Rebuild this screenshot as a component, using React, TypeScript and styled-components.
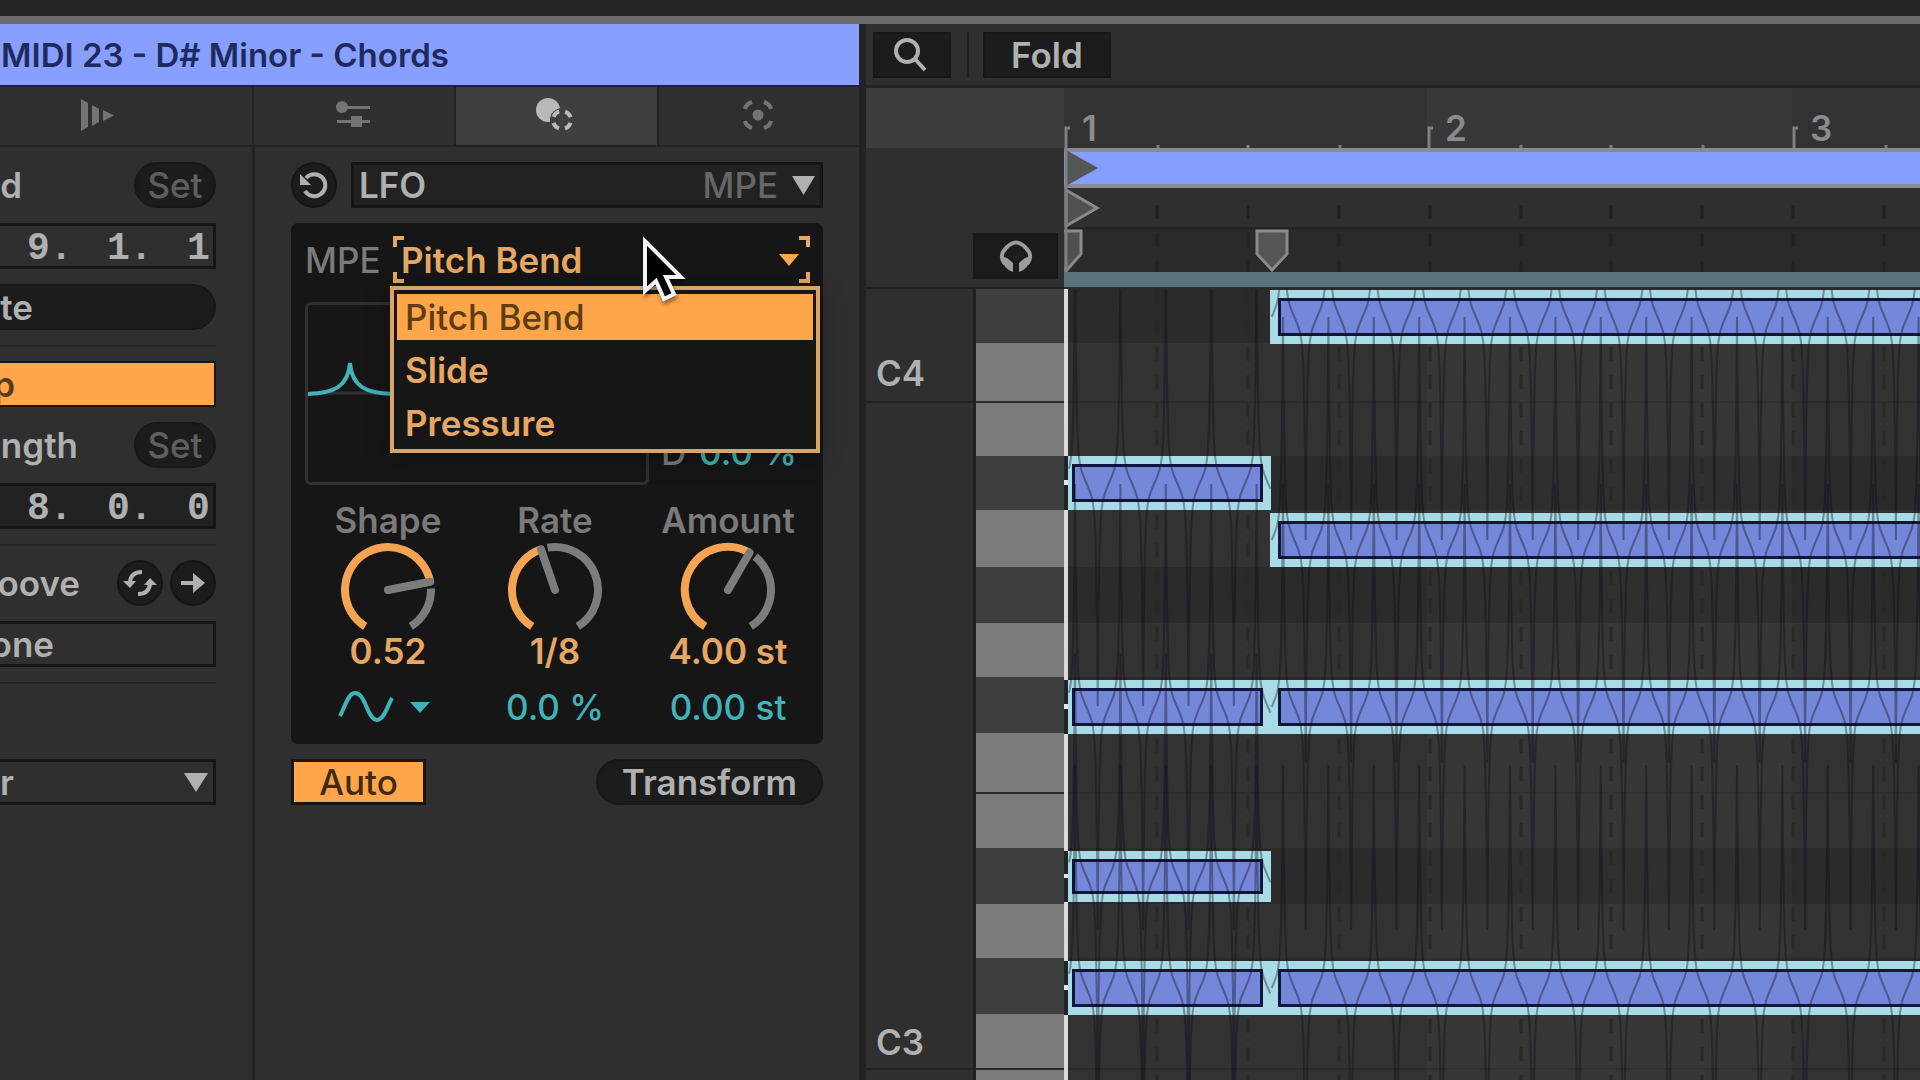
import React from "react";
import styled, { createGlobalStyle, css } from "styled-components";

const c = {
  bg: "#2f2f2f",
  edge: "#222222",
  ink: "#161616",
  well: "#1c1c1c",
  text: "#b0b0b0",
  dim: "#7a7a7a",
  faint: "#5f5f5f",
  orange: "#ffa54a",
  orangeText: "#e6a765",
  cyan: "#42b1b8",
  blue: "#879fff",
  aqua: "#a9dbe6",
  note: "#7587d8",
};

const Global = createGlobalStyle`
  *, *::before, *::after { box-sizing: border-box; }
  body {
    margin: 0;
    background: ${c.bg};
    overflow: hidden;
  }
  body, button, input, select {
    font-family: Inter, "Liberation Sans", sans-serif;
    font-size: 35px;
    font-weight: 600;
    line-height: 40px;
    color: ${c.text};
  }
  button, input, select {
    margin: 0;
    padding: 0;
    border: 0;
    background: none;
    appearance: none;
    outline: none;
  }
  svg { display: block; flex: none; }
`;

/* ---------- page frame ---------- */

const Page = styled.div`
  display: flex;
  flex-direction: column;
  height: 100vh;
  overflow: hidden;
`;
const TopStrip = styled.div`
  flex: none;
  height: 24px;
  background: #242424;
  border-bottom: 8px solid #6a6a6a;
`;
const Workspace = styled.main`
  flex: 1;
  min-height: 0;
  display: flex;
`;

/* ---------- clip panel ---------- */

const ClipPanel = styled.section`
  flex: none;
  width: 866px;
  display: flex;
  flex-direction: column;
  border-right: 7px solid ${c.edge};
`;
const ClipHeader = styled.header`
  height: 61px;
  display: flex;
  align-items: center;
  background: ${c.blue};
`;
const ClipTitle = styled.h1`
  margin: 0;
  width: 449px;
  display: flex;
  justify-content: flex-end;
  white-space: pre;
  font-size: 33px;
  font-weight: 600;
  color: #1f2b5e;
`;
const TabBar = styled.nav`
  height: 62px;
  display: grid;
  grid-template-columns: 252px 1fr 1fr 1fr;
  gap: 2px;
  padding: 2px 0;
  background: ${c.edge};
`;
const Tab = styled.button<{ $active?: boolean; $clipped?: boolean }>`
  display: flex;
  align-items: center;
  justify-content: ${(p) => (p.$clipped ? "flex-end" : "center")};
  padding: 0 ${(p) => (p.$clipped ? "138px" : "2px")} 2px 0;
  background: ${(p) => (p.$active ? "#3f3f3f" : c.bg)};
`;
const Columns = styled.div`
  flex: 1;
  display: grid;
  grid-template-columns: 252px 1fr;
  gap: 3px;
  background: ${c.edge};
`;
const Column = styled.div`
  display: flex;
  flex-direction: column;
  gap: 15px;
  padding: 15px 36px;
  background: ${c.bg};
`;
const LaunchColumn = styled(Column)`
  padding-left: 0;
`;
const Row = styled.div`
  height: 46px;
  display: flex;
  align-items: center;
  justify-content: space-between;
`;
const Clipped = styled.span<{ $w: number }>`
  width: ${(p) => p.$w}px;
  display: flex;
  justify-content: flex-end;
`;
const Pill = styled.button<{ $w: number; $dim?: boolean }>`
  width: ${(p) => p.$w}px;
  height: 46px;
  border: 2px solid #181818;
  border-radius: 23px;
  background: ${c.well};
  color: ${(p) => (p.$dim ? c.faint : c.text)};
  font-weight: ${(p) => (p.$dim ? 500 : 600)};
`;
const Round = styled.button`
  width: 46px;
  height: 46px;
  display: grid;
  place-items: center;
  border: 2px solid #161616;
  border-radius: 50%;
  background: ${c.well};
`;
const RoundPair = styled.div`
  display: flex;
  gap: 7px;
`;
const OpenEnded = styled.button<{ $kind: "pill" | "on" | "box" }>`
  height: 46px;
  display: flex;
  align-items: center;
  border: 3px solid ${c.ink};
  border-left: 0;
  ${(p) =>
    p.$kind === "pill" &&
    css`
      border: 2px solid #181818;
      border-left: 0;
      border-radius: 0 23px 23px 0;
      background: ${c.well};
    `}
  ${(p) =>
    p.$kind === "on" &&
    css`
      border-width: 2px;
      border-left: 0;
      background: ${c.orange};
      color: #5a3a17;
    `}
`;
const PositionBox = styled.div<{ $deep?: boolean }>`
  height: 46px;
  display: grid;
  grid-template-columns: 80px 80px 1fr;
  align-items: center;
  padding: 3px 2px 0 27px;
  border: 3px solid ${c.ink};
  border-left: 0;
  background: ${(p) => (p.$deep ? "#222222" : c.bg)};
  input {
    width: 100%;
    min-width: 0;
    height: 40px;
    font-family: "Liberation Mono", monospace;
    font-size: 38px;
    font-weight: 700;
  }
`;
const Rule = styled.hr`
  width: 100%;
  height: 1px;
  margin: 0;
  border: 0;
  background: #222222;
  box-shadow: 0 1px #252525;
`;
const SelectBox = styled.label<{ $deep?: boolean; $low?: boolean }>`
  flex: ${(p) => (p.$low ? "none" : 1)};
  height: 46px;
  margin-top: ${(p) => (p.$low ? "61px" : "0")};
  display: flex;
  align-items: center;
  gap: 14px;
  padding: 0 5px 0 ${(p) => (p.$low ? "0" : "5px")};
  border: 3px solid ${c.ink};
  border-left-width: ${(p) => (p.$low ? "0" : "3px")};
  background: ${(p) => (p.$deep ? "#222222" : c.bg)};
  select {
    flex: 1;
    min-width: 0;
    height: 40px;
  }
`;
const Dim = styled.span`
  color: ${c.dim};
  font-weight: 500;
`;
const Faint = styled.span`
  color: #666666;
  font-weight: 500;
`;

/* ---------- transform device ---------- */

const ToolRow = styled(Row)`
  gap: 14px;
`;
const Device = styled.section`
  position: relative;
  padding: 13px 0 17px;
  border-radius: 7px;
  background: ${c.ink};
`;
const TargetRow = styled.div`
  height: 47px;
  display: grid;
  grid-template-columns: 88px 1fr;
  align-items: center;
  padding: 0 13px 0 14px;
`;
const TargetField = styled.div`
  position: relative;
  height: 47px;
  display: flex;
  align-items: center;
  padding: 0 11px 0 8px;
  select {
    flex: 1;
    height: 40px;
    color: ${c.orangeText};
  }
`;
const Corner = styled.i<{ $v: "top" | "bottom"; $h: "left" | "right" }>`
  position: absolute;
  ${(p) => p.$v}: 0;
  ${(p) => p.$h}: 0;
  width: 11px;
  height: 11px;
  border-${(p) => p.$v}: 4px solid ${c.orangeText};
  border-${(p) => p.$h}: 4px solid ${c.orangeText};
`;
const Menu = styled.ul`
  position: absolute;
  z-index: 2;
  left: -3px;
  right: -10px;
  top: 50px;
  margin: 0;
  padding: 4px 3px 0;
  list-style: none;
  border: 4px solid #d9a566;
  background: ${c.ink};
  box-shadow: 0 4px 24px rgba(0, 0, 0, 0.3);
`;
const MenuItem = styled.li<{ $on?: boolean }>`
  height: ${(p) => (p.$on ? "46px" : "53px")};
  margin-bottom: ${(p) => (p.$on ? "3px" : "0")};
  display: flex;
  align-items: center;
  padding-left: 8px;
  background: ${(p) => (p.$on ? c.orange : "none")};
  color: ${(p) => (p.$on ? "#5e3c14" : c.orangeText)};
  font-weight: ${(p) => (p.$on ? 500 : 600)};
`;
const GraphRow = styled.div`
  display: flex;
  align-items: flex-end;
  margin-top: 19px;
  padding: 0 26px 0 14px;
`;
const Graph = styled.div`
  width: 344px;
  height: 183px;
  border: 3px solid #303030;
  border-radius: 6px;
`;
const SideValue = styled.div`
  flex: 1;
  display: flex;
  justify-content: space-between;
  padding: 0 0 13px 12px;
`;
const Knobs = styled.div`
  display: grid;
  grid-template-columns: 160fr 174fr 172fr;
  margin-top: 15px;
  padding: 0 9px 0 17px;
`;
const KnobCell = styled.div`
  display: flex;
  flex-direction: column;
  align-items: center;
`;
const KnobLabel = styled.label`
  display: flex;
  flex-direction: column;
  align-items: center;
  color: ${c.dim};
`;
const Dial = styled.span`
  position: relative;
  display: block;
  margin: 2px 0 -1px;
  input {
    position: absolute;
    inset: 0;
    width: 100%;
    height: 100%;
    opacity: 0;
  }
`;
const Value = styled.output<{ $tone: "orange" | "cyan" }>`
  color: ${(p) => (p.$tone === "orange" ? c.orangeText : c.cyan)};
  font-weight: ${(p) => (p.$tone === "orange" ? 600 : 500)};
`;
const Modulation = styled.div`
  height: 40px;
  display: flex;
  align-items: center;
  margin-top: 16px;
`;
const WaveButton = styled.button`
  display: flex;
  align-items: center;
  gap: 16px;
  padding-right: 8px;
`;
const AutoButton = styled.button`
  width: 135px;
  height: 46px;
  border: 3px solid #1b1510;
  background: ${c.orange};
  color: #3f2a12;
  font-weight: 500;
`;

/* ---------- note editor ---------- */

const Editor = styled.section`
  flex: 1;
  min-width: 0;
  display: flex;
  flex-direction: column;
`;
const Toolbar = styled.header`
  flex: none;
  height: 64px;
  display: flex;
  align-items: flex-start;
  gap: 16px;
  padding: 8px 7px;
  border-bottom: 3px solid ${c.edge};
`;
const ToolButton = styled.button<{ $w: number }>`
  width: ${(p) => p.$w}px;
  height: 46px;
  display: grid;
  place-items: center;
  border: 2px solid #181818;
  background: ${c.well};
`;
const ToolRule = styled.div`
  width: 2px;
  height: 46px;
  background: #222222;
  margin-right: -2px;
`;
const Head = styled.div`
  flex: none;
  display: grid;
  grid-template-columns: 198px 1fr;
`;
const HeadGutter = styled.div`
  display: flex;
  flex-direction: column;
  align-items: flex-end;
  justify-content: flex-end;
  padding: 0 6px 8px 0;
  border-top: 60px solid #3d3d3d;
  border-bottom: 2px solid ${c.edge};
`;
const HeadLanes = styled.div`
  min-width: 0;
  overflow: hidden;
`;
const Ruler = styled.div`
  height: 60px;
  display: flex;
`;
const Bar = styled.div<{ $w?: number; $light?: boolean }>`
  position: relative;
  flex: ${(p) => (p.$w ? "none" : 1)};
  width: ${(p) => (p.$w ? p.$w + "px" : "auto")};
  overflow: hidden;
  padding: 20px 0 0 18px;
  background: ${(p) => (p.$light ? "#383838" : "#323232")};
  color: #8b8b8b;
  font-weight: 600;
  svg {
    position: absolute;
    left: 0;
    bottom: 0;
  }
`;
const LoopLane = styled.div`
  height: 40px;
  border: 4px solid #8a8a92;
  border-width: 4px 0;
  background: ${c.blue};
`;
const Lane = styled.div<{ $h: number; $dark?: boolean }>`
  height: ${(p) => p.$h}px;
  border-bottom: ${(p) => (p.$dark ? "0" : "2px solid #222222")};
  background: ${(p) => (p.$dark ? "#2a2a2a" : c.bg)};
`;
const Envelope = styled.div`
  height: 17px;
  background: #587379;
  border-bottom: 2px solid #262c2d;
`;
const HeadWrap = styled.div`
  position: relative;
`;
const HeadOverlay = styled.svg`
  position: absolute;
  left: 0;
  top: 0;
  overflow: hidden;
`;
const Body = styled.div`
  flex: 1;
  min-height: 0;
  display: grid;
  grid-template-columns: 198px 1fr;
  overflow: hidden;
`;
const Keyboard = styled.div`
  display: flex;
  flex-direction: column;
`;
const KeyRow = styled.div<{ $h: number; $cline?: boolean }>`
  flex: none;
  height: ${(p) => p.$h}px;
  display: grid;
  grid-template-columns: 107px 1fr;
  gap: 3px;
  background: ${c.edge};
  > span {
    display: flex;
    align-items: center;
    padding: 2px 0 0 10px;
    background: ${c.bg};
    border-bottom: ${(p) => (p.$cline ? "2px solid #222222" : "0")};
  }
`;
const Key = styled.button<{ $black?: boolean; $line?: boolean }>`
  background: ${(p) => (p.$black ? "#3e3e3e" : "#7b7b7b")};
  border-bottom: ${(p) => (p.$line ? "2px solid #2a2a2a" : "0")};
`;
const Roll = styled.div`
  position: relative;
  min-width: 0;
  overflow: hidden;
`;
const RollRow = styled.div<{ $h: number; $black?: boolean; $line?: boolean }>`
  height: ${(p) => p.$h}px;
  background: ${(p) => (p.$black ? "#2b2b2b" : "#323232")};
  border-bottom: ${(p) => (p.$line ? "2px solid #2d2d2d" : "0")};
`;
const BarTint = styled.div`
  position: absolute;
  left: 363px;
  top: 0;
  bottom: 0;
  width: 365px;
  background: rgba(255, 255, 255, 0.018);
`;
const Playhead = styled.div`
  position: absolute;
  left: 0;
  top: 0;
  bottom: 0;
  width: 4px;
  background: #dadada;
`;
const NoteBlock = styled.div<{ $x: number; $y: number; $w?: number; $h: number; $first?: boolean }>`
  position: absolute;
  left: ${(p) => p.$x}px;
  top: ${(p) => p.$y}px;
  height: ${(p) => p.$h}px;
  ${(p) => (p.$w ? `width: ${p.$w}px;` : "right: 0;")}
  padding: 8px ${(p) => (p.$w ? 8 : 0)}px 8px ${(p) => (p.$first ? 4 : 8)}px;
  background: ${c.aqua};
  ${(p) =>
    p.$first &&
    css`
      &::before {
        content: "";
        position: absolute;
        left: -4px;
        top: 0;
        bottom: 0;
        width: 4px;
        background: linear-gradient(#1f2626 45%, #e6e6e6 45%, #e6e6e6 53%, #1f2626 53%);
      }
    `}
  &::after {
    content: "";
    display: block;
    height: 100%;
    border: 3px solid #10173a;
    border-right-width: ${(p) => (p.$w ? 3 : 0)}px;
    background: ${c.note};
  }
`;
const RollCurves = styled.svg`
  position: absolute;
  left: 0;
  top: 0;
`;
const Pointer = styled.svg`
  position: absolute;
  z-index: 3;
  left: 350px;
  top: 11px;
  filter: drop-shadow(1px 3px 2px rgba(0, 0, 0, 0.45));
`;

/* ---------- drawings ---------- */

const Triangle = ({ w, h, fill }: { w: number; h: number; fill: string }) => (
  <svg width={w} height={h} viewBox="0 0 10 10" preserveAspectRatio="none" aria-hidden="true">
    <path d="M0 0H10L5 10Z" fill={fill} />
  </svg>
);

const polar = (deg: number, r: number) => {
  const a = (deg * Math.PI) / 180;
  return `${(48 + r * Math.sin(a)).toFixed(2)} ${(48 - r * Math.cos(a)).toFixed(2)}`;
};
const arc = (from: number, to: number) =>
  `M${polar(from, 43)}A43 43 0 ${to - from > 180 ? 1 : 0} 1 ${polar(to, 43)}`;

function Knob({ name, angle, value }: { name: string; angle: number; value: string }) {
  return (
    <>
      <KnobLabel>
        {name}
        <Dial>
          <svg width="96" height="90" viewBox="0 0 96 90" aria-hidden="true">
            <path d={arc(-148, angle)} fill="none" stroke="#f5a454" strokeWidth="8" />
            <path d={arc(angle + 9, 148)} fill="none" stroke="#7c7c7c" strokeWidth="8" />
            <path d={`M48 48L${polar(angle, 43)}`} stroke="#7c7c7c" strokeWidth="8" strokeLinecap="round" />
          </svg>
          <input type="range" min={-148} max={148} defaultValue={angle} />
        </Dial>
      </KnobLabel>
      <Value $tone="orange">{value}</Value>
    </>
  );
}

/* ---------- note data ---------- */

type KeyInfo = { h: number; black?: boolean; name?: string; line?: boolean };
const keys: KeyInfo[] = [
  { h: 54, black: true },
  { h: 60, name: "C4", line: true },
  { h: 53 },
  { h: 54, black: true },
  { h: 57 },
  { h: 56, black: true },
  { h: 54 },
  { h: 56, black: true },
  { h: 61, line: true },
  { h: 54 },
  { h: 56, black: true },
  { h: 54 },
  { h: 56, black: true },
  { h: 56, name: "C3", line: true },
  { h: 56 },
];

type Note = { x: number; y: number; h: number; w?: number };
const notes: Note[] = [
  { x: 206, y: 1, h: 54 },
  { x: 4, y: 167, h: 54, w: 203 },
  { x: 206, y: 224, h: 54 },
  { x: 4, y: 391, h: 54, w: 203 },
  { x: 206, y: 391, h: 54 },
  { x: 4, y: 562, h: 51, w: 203 },
  { x: 4, y: 672, h: 54, w: 203 },
  { x: 206, y: 672, h: 54 },
];

const PERIOD = 45.4;
const SWING = 223;
const bend = (d: number) => 26 * (1 - d / (PERIOD / 4)) + (SWING - 26) * Math.exp(-d / 1.3);
const steps = [0, 0.3, 0.6, 1, 1.5, 2, 2.5, 3, 4, 5, 6, 7, 8, 9, 10, 11.35];

function curve(note: Note) {
  const mid = note.y + note.h / 2;
  const peak = note.w ? 11 : 219;
  const from = note.x + 1;
  const to = note.w ? note.x + note.w : 2800;
  const pts: string[] = [];
  for (let i = 0; peak + (i * PERIOD) / 2 < to + PERIOD; i++) {
    const cx = peak + (i * PERIOD) / 2;
    const sign = i % 2 ? 1 : -1;
    const offsets = [...steps.slice(1).map((s) => -s).reverse(), ...steps];
    for (const o of offsets) {
      const x = cx + o;
      if (x >= from && x <= to) pts.push(`${x.toFixed(1)} ${(mid + sign * bend(Math.abs(o))).toFixed(1)}`);
    }
  }
  return "M" + pts.join("L");
}

const beats = Array.from({ length: 30 }, (_, i) => Math.round(2 + (i + 1) * 90.9));

export default function App() {
  return (
    <>
      <Global />
      <Page>
        <TopStrip />
        <Workspace>
          <ClipPanel>
            <ClipHeader>
              <ClipTitle>MIDI 23 - D# Minor - Chords</ClipTitle>
            </ClipHeader>
            <TabBar>
              <Tab $clipped aria-label="Launch">
                <svg width="34" height="32" viewBox="0 0 34 32" fill="#747474">
                  <path d="M1 0L8 4V28L1 32ZM12 6L19 10V23L12 27ZM23 11L34 16.500L23 22Z" />
                </svg>
              </Tab>
              <Tab aria-label="Properties">
                <svg width="34" height="28" viewBox="0 0 34 28" fill="#747474">
                  <circle cx="6" cy="6" r="6" />
                  <path d="M6 5H34V8H6ZM1 19H15V15H26V19H34V22H26V26H15V22H1Z" />
                </svg>
              </Tab>
              <Tab $active aria-label="Transform">
                <svg width="38" height="34" viewBox="0 0 38 34">
                  <circle cx="12" cy="12" r="12" fill="#b9b9b9" />
                  <circle cx="26" cy="22" r="12" fill="#3f3f3f" />
                  <circle
                    cx="26"
                    cy="22"
                    r="9"
                    fill="none"
                    stroke="#b9b9b9"
                    strokeWidth="4"
                    strokeDasharray="8 6.130"
                    strokeDashoffset="-3"
                  />
                </svg>
              </Tab>
              <Tab aria-label="Generate">
                <svg width="32" height="32" viewBox="0 0 32 32" fill="none" stroke="#747474" strokeWidth="4">
                  <circle cx="16" cy="16" r="5.500" fill="#747474" stroke="none" />
                  <path d="M3 10Q4 5 10 3M22 3Q28 5 29 10M29 22Q28 27 22 29M10 29Q4 27 3 22" />
                </svg>
              </Tab>
            </TabBar>
            <Columns>
              <LaunchColumn>
                <Row>
                  <Clipped $w={22}>d</Clipped>
                  <Pill $w={82} $dim>
                    Set
                  </Pill>
                </Row>
                <PositionBox>
                  <input aria-label="End bar" defaultValue="9." />
                  <input aria-label="End beat" defaultValue="1." />
                  <input aria-label="End sixteenth" defaultValue="1" />
                </PositionBox>
                <OpenEnded $kind="pill">
                  <Clipped $w={33}>te</Clipped>
                </OpenEnded>
                <Rule />
                <OpenEnded $kind="on" aria-pressed="true">
                  <Clipped $w={15}>p</Clipped>
                </OpenEnded>
                <Row>
                  <Clipped $w={78}>ngth</Clipped>
                  <Pill $w={82} $dim>
                    Set
                  </Pill>
                </Row>
                <PositionBox $deep>
                  <input aria-label="Length bars" defaultValue="8." />
                  <input aria-label="Length beats" defaultValue="0." />
                  <input aria-label="Length sixteenths" defaultValue="0" />
                </PositionBox>
                <Rule />
                <Row>
                  <Clipped $w={80}>oove</Clipped>
                  <RoundPair>
                    <Round aria-label="Swap groove">
                      <svg width="34" height="28" viewBox="0 0 34 28" fill="none" stroke={c.text} strokeWidth="4">
                        <path d="M19 3Q8 3 7 13M15 25Q26 25 27 15" />
                        <path d="M0 12H13L7 19ZM21 16H34L27 9Z" fill={c.text} stroke="none" />
                      </svg>
                    </Round>
                    <Round aria-label="Commit groove">
                      <svg width="26" height="20" viewBox="0 0 26 20" fill={c.text}>
                        <path d="M1 8H13V0L25 10L13 20V12H1Z" />
                      </svg>
                    </Round>
                  </RoundPair>
                </Row>
                <OpenEnded $kind="box">
                  <Clipped $w={54}>one</Clipped>
                </OpenEnded>
                <Rule />
                <SelectBox $low>
                  <select aria-label="Scale" defaultValue="r">
                    <option>r</option>
                  </select>
                  <Triangle w={24} h={19} fill={c.text} />
                </SelectBox>
              </LaunchColumn>

              <Column>
                <ToolRow>
                  <Round aria-label="Reset">
                    <svg width="30" height="28" viewBox="0 0 30 28" fill="none" stroke={c.text} strokeWidth="4">
                      <path d="M7 7A11 11 0 1 1 6 20" />
                      <path d="M1 3V14H12Z" fill={c.text} stroke="none" />
                    </svg>
                  </Round>
                  <SelectBox $deep>
                    <select aria-label="Transformation" defaultValue="LFO">
                      <option>LFO</option>
                    </select>
                    <Faint>MPE</Faint>
                    <Triangle w={23} h={19} fill={c.text} />
                  </SelectBox>
                </ToolRow>

                <Device>
                  <TargetRow>
                    <Dim as="label" htmlFor="target">
                      MPE
                    </Dim>
                    <TargetField>
                      <Corner $v="top" $h="left" />
                      <Corner $v="bottom" $h="left" />
                      <Corner $v="top" $h="right" />
                      <Corner $v="bottom" $h="right" />
                      <select id="target" defaultValue="Pitch Bend">
                        <option>Pitch Bend</option>
                      </select>
                      <Triangle w={20} h={12} fill={c.orange} />
                      <Menu role="listbox" aria-label="MPE target">
                        <MenuItem role="option" aria-selected="true" $on>
                          Pitch Bend
                        </MenuItem>
                        <MenuItem role="option">Slide</MenuItem>
                        <MenuItem role="option">Pressure</MenuItem>
                      </Menu>
                    </TargetField>
                  </TargetRow>
                  <GraphRow>
                    <Graph>
                      <svg width="338" height="177" viewBox="0 0 338 177" fill="none">
                        <path d="M0 88H338" stroke="#333333" strokeWidth="3" />
                        <path
                          d="M0 89C26 88 40 82 42 58C44 82 58 88 84 89C110 88 124 82 126 58"
                          stroke={c.cyan}
                          strokeWidth="4"
                        />
                      </svg>
                    </Graph>
                    <SideValue>
                      <Dim>D</Dim>
                      <Value $tone="cyan">0.0 %</Value>
                    </SideValue>
                  </GraphRow>
                  <Knobs>
                    <KnobCell>
                      <Knob name="Shape" angle={79} value="0.52" />
                      <Modulation>
                        <WaveButton aria-label="Waveform">
                          <svg width="56" height="32" viewBox="0 0 56 32" fill="none">
                            <path
                              d="M2 25C7 16 10 2 17 2C28 2 29 29 39 29C46 29 49 16 54 7"
                              stroke={c.cyan}
                              strokeWidth="4"
                            />
                          </svg>
                          <Triangle w={20} h={11} fill={c.cyan} />
                        </WaveButton>
                      </Modulation>
                    </KnobCell>
                    <KnobCell>
                      <Knob name="Rate" angle={-19} value="1/8" />
                      <Modulation>
                        <Value $tone="cyan">0.0 %</Value>
                      </Modulation>
                    </KnobCell>
                    <KnobCell>
                      <Knob name="Amount" angle={30} value="4.00 st" />
                      <Modulation>
                        <Value $tone="cyan">0.00 st</Value>
                      </Modulation>
                    </KnobCell>
                  </Knobs>
                  <Pointer width="48" height="72" viewBox="0 0 48 72">
                    <path
                      d="M4 7V57L15 47L23 65L33 60L25 43H40Z"
                      fill="#000000"
                      stroke="#f4f4f4"
                      strokeWidth="4"
                    />
                  </Pointer>
                </Device>

                <Row>
                  <AutoButton aria-pressed="true">Auto</AutoButton>
                  <Pill $w={227}>Transform</Pill>
                </Row>
              </Column>
            </Columns>
          </ClipPanel>

          <Editor>
            <Toolbar>
              <ToolButton $w={78} aria-label="Search">
                <svg width="38" height="34" viewBox="0 0 38 34" fill="none" stroke={c.text}>
                  <circle cx="14" cy="13" r="11" strokeWidth="4" />
                  <path d="M22 21L32 32" strokeWidth="4" />
                </svg>
              </ToolButton>
              <ToolRule />
              <ToolButton $w={128}>Fold</ToolButton>
            </Toolbar>
            <Head>
              <HeadGutter>
                <ToolButton $w={85} aria-label="Preview">
                  <svg width="34" height="32" viewBox="0 0 34 32" fill="none" stroke="#9c9c9c">
                    <path d="M6 24Q1 18 4 12Q8 6 12 4Q17 1 22 4Q26 6 30 12Q33 18 28 24" strokeWidth="4" />
                    <path d="M2 16L8 18L14 23V32Q4 29 2 16ZM32 16L26 18L20 23V32Q30 29 32 16Z" fill="#9c9c9c" stroke="none" />
                  </svg>
                </ToolButton>
              </HeadGutter>
              <HeadLanes>
                <Ruler>
                  {[1, 2, 3].map((n) => (
                    <Bar key={n} $w={n === 1 ? 363 : n === 2 ? 365 : undefined} $light={n === 2}>
                      {n}
                      <svg width="365" height="22" stroke="#7f7f7f" strokeWidth="3" fill="none">
                        <path d="M2 22V2H6M94 22V19M184 22V19M276 22V19" />
                      </svg>
                    </Bar>
                  ))}
                </Ruler>
                <HeadWrap>
                  <LoopLane />
                  <Lane $h={41} />
                  <Lane $h={43} $dark />
                  <Envelope />
                  <HeadOverlay width="100%" height="124">
                    {beats.map((x) => (
                      <path key={x} d={`M${x} 57V124`} stroke="#222222" strokeWidth="3" strokeDasharray="14 14" />
                    ))}
                    <path d="M2 2L34 20L2 38Z" fill="#545655" />
                    <path d="M2 42L33 60L2 78Z" fill="#505050" stroke="#8a8a8a" strokeWidth="3" />
                    <path d="M-13 83H17V106L2 123L-13 106Z" fill="#505050" stroke="#8a8a8a" strokeWidth="3" />
                    <path d="M193 83H223V106L208 122L193 106Z" fill="#555555" stroke="#8a8a8a" strokeWidth="3" />
                    <path d="M2 0V124" stroke="#7f7f7f" strokeWidth="3" />
                  </HeadOverlay>
                </HeadWrap>
              </HeadLanes>
            </Head>
            <Body>
              <Keyboard>
                {keys.map((k, i) => (
                  <KeyRow key={i} $h={k.h} $cline={!!k.name}>
                    <span>{k.name}</span>
                    <Key $black={k.black} $line={k.line} aria-label={k.name ? `Key ${k.name}` : "Key"} />
                  </KeyRow>
                ))}
              </Keyboard>
              <Roll>
                {keys.map((k, i) => (
                  <RollRow key={i} $h={k.h} $black={k.black} $line={k.line} />
                ))}
                <BarTint />
                <RollCurves width="100%" height="100%">
                  {beats.map((x) => (
                    <path key={x} d={`M${x} 2V1600`} stroke="#292929" strokeWidth="3" strokeDasharray="14 14" />
                  ))}
                </RollCurves>
                <Playhead />
                {notes.map((n, i) => (
                  <NoteBlock key={i} $x={n.x} $y={n.y} $w={n.w} $h={n.h} $first={!!n.w} />
                ))}
                <RollCurves width="100%" height="100%" fill="none" stroke="#0a0c16" strokeOpacity="0.38" strokeWidth="2">
                  {notes.map((n, i) => (
                    <path key={i} d={curve(n)} />
                  ))}
                </RollCurves>
              </Roll>
            </Body>
          </Editor>
        </Workspace>
      </Page>
    </>
  );
}
